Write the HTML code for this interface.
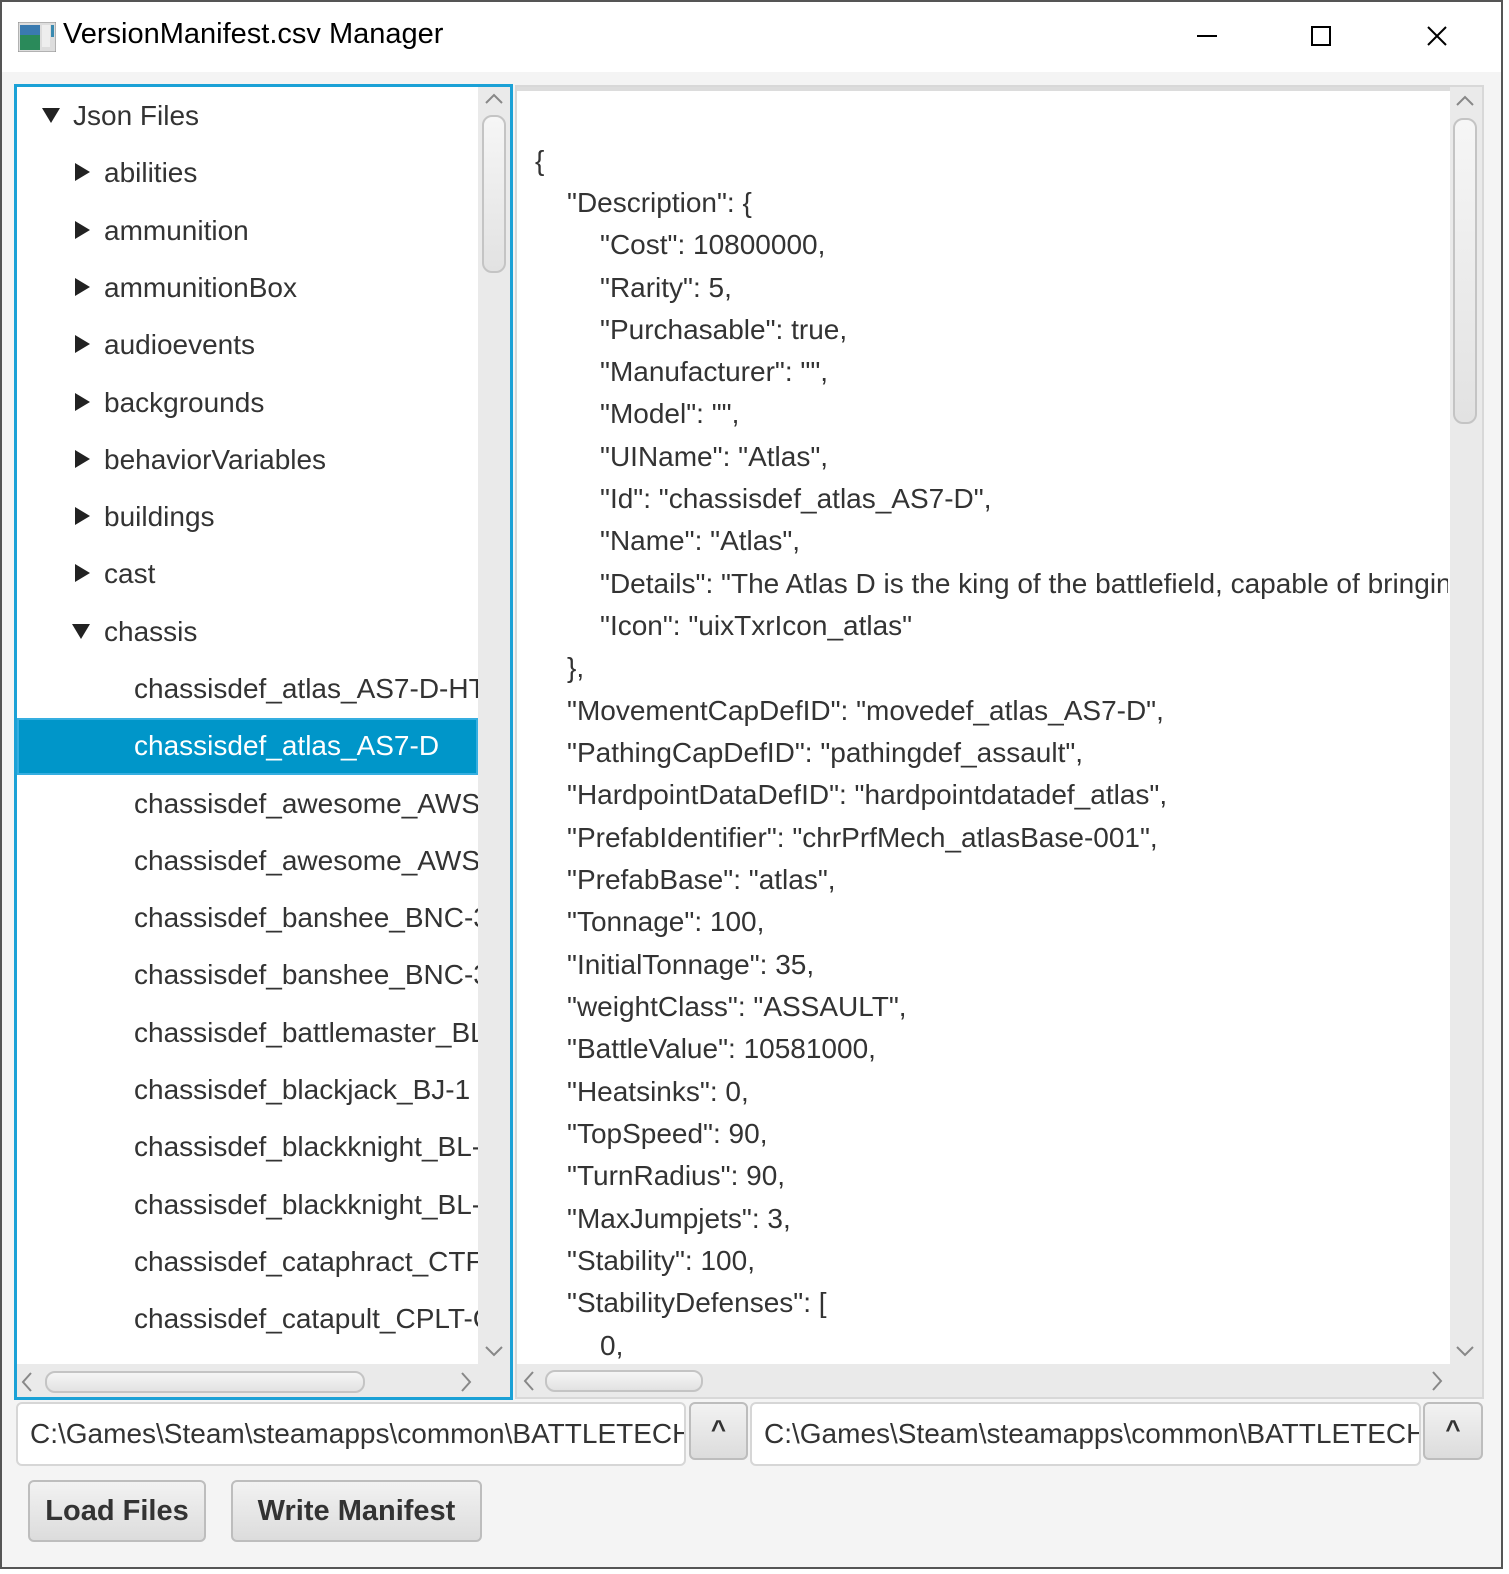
<!DOCTYPE html>
<html><head><meta charset="utf-8"><style>
*{margin:0;padding:0;box-sizing:border-box}
body{width:1509px;height:1574px;background:#fff;position:relative;overflow:hidden;font-family:"Liberation Sans","DejaVu Sans",sans-serif;color:#333}
.win{position:absolute;left:0;top:0;width:1503px;height:1569px;border:2px solid #555;background:#f4f4f4}
.title{position:absolute;left:0;top:0;width:1499px;height:70px;background:#fff}
.abs{position:absolute}
.row{position:absolute;height:57px;line-height:57px;font-size:28px;white-space:nowrap;color:#333}
.tri-r{position:absolute;width:0;height:0;border-top:9px solid transparent;border-bottom:9px solid transparent;border-left:15px solid #222}
.tri-d{position:absolute;width:0;height:0;border-left:9px solid transparent;border-right:9px solid transparent;border-top:15px solid #222}
.jl{position:absolute;font-size:28px;line-height:42px;white-space:nowrap;color:#333}
.sb{background:#eaeaea}
.thumb{position:absolute;border:2px solid #c4c4c4;border-radius:10px;background:linear-gradient(#f6f6f6,#e2e2e2)}
.btn{position:absolute;border:2px solid #bdbdbd;border-radius:6px;background:linear-gradient(#f2f2f2,#dcdcdc);font-weight:bold;font-size:29px;color:#333;text-align:center}
.tf{position:absolute;background:#fff;border:2px solid #d6d6d6;border-radius:6px;font-size:28px;line-height:60px;padding-left:12px;white-space:nowrap;overflow:hidden;color:#333}
</style></head><body>
<div class="win">
<div class="title"></div>
</div>
<!-- title -->
<svg class="abs" style="left:18px;top:22px" width="38" height="30"><rect x="0" y="0" width="38" height="30" fill="#ddd" stroke="#888"/><rect x="2" y="3" width="20" height="25" fill="#2a8a5a"/><rect x="2" y="3" width="20" height="10" fill="#3a7ab0"/><rect x="24" y="3" width="8" height="22" fill="#eee"/><rect x="33" y="3" width="3" height="12" fill="#3a8ab0"/></svg>
<div class="abs" style="left:63px;top:18px;font-size:29px;color:#000;font-family:'Liberation Sans',sans-serif">VersionManifest.csv Manager</div>
<div class="abs" style="left:1197px;top:35px;width:20px;height:2px;background:#000"></div>
<div class="abs" style="left:1311px;top:26px;width:20px;height:20px;border:2px solid #000"></div>
<svg class="abs" style="left:1427px;top:26px" width="20" height="20"><path d="M1 1L19 19M19 1L1 19" stroke="#000" stroke-width="2"/></svg>

<!-- left tree -->
<div class="abs" style="left:14px;top:84px;width:499px;height:1316px;border:3px solid #1ba1d6;background:#fff;overflow:hidden">
  <div class="abs sb" style="left:461px;top:0;width:32px;height:1277px"></div>
  <svg class="abs" style="left:468px;top:6px" width="18" height="12"><path d="M1 10L9 2L17 10" stroke="#888" stroke-width="2" fill="none"/></svg>
  <div class="thumb" style="left:465px;top:28px;width:24px;height:158px"></div>
  <svg class="abs" style="left:468px;top:1258px" width="18" height="12"><path d="M1 2L9 10L17 2" stroke="#888" stroke-width="2" fill="none"/></svg>
  <div class="abs sb" style="left:0;top:1277px;width:493px;height:33px"></div>
  <svg class="abs" style="left:4px;top:1285px" width="12" height="20"><path d="M10 1L2 10L10 19" stroke="#888" stroke-width="2" fill="none"/></svg>
  <div class="thumb" style="left:28px;top:1284px;width:320px;height:22px"></div>
  <svg class="abs" style="left:443px;top:1285px" width="12" height="20"><path d="M2 1L10 10L2 19" stroke="#888" stroke-width="2" fill="none"/></svg>
</div>
<div class="abs" style="left:17px;top:87px;width:461px;height:1277px;overflow:hidden">
  <div class="abs" style="left:0;top:631px;width:461px;height:57px;background:#0096c9;border:2px solid #35aee0"></div>
  <div class="tri-d" style="left:25px;top:21px"></div><div class="row" style="left:56px;top:0">Json Files</div>
  <div class="tri-r" style="left:58px;top:76px"></div><div class="row" style="left:87px;top:57px">abilities</div>
  <div class="tri-r" style="left:58px;top:134px"></div><div class="row" style="left:87px;top:115px">ammunition</div>
  <div class="tri-r" style="left:58px;top:191px"></div><div class="row" style="left:87px;top:172px">ammunitionBox</div>
  <div class="tri-r" style="left:58px;top:248px"></div><div class="row" style="left:87px;top:229px">audioevents</div>
  <div class="tri-r" style="left:58px;top:306px"></div><div class="row" style="left:87px;top:287px">backgrounds</div>
  <div class="tri-r" style="left:58px;top:363px"></div><div class="row" style="left:87px;top:344px">behaviorVariables</div>
  <div class="tri-r" style="left:58px;top:420px"></div><div class="row" style="left:87px;top:401px">buildings</div>
  <div class="tri-r" style="left:58px;top:477px"></div><div class="row" style="left:87px;top:458px">cast</div>
  <div class="tri-d" style="left:55px;top:537px"></div><div class="row" style="left:87px;top:516px">chassis</div>
  <div class="row" style="left:117px;top:573px">chassisdef_atlas_AS7-D-HT</div>
  <div class="row" style="left:117px;top:630px;color:#fff">chassisdef_atlas_AS7-D</div>
  <div class="row" style="left:117px;top:688px">chassisdef_awesome_AWS-8Q</div>
  <div class="row" style="left:117px;top:745px">chassisdef_awesome_AWS-8T</div>
  <div class="row" style="left:117px;top:802px">chassisdef_banshee_BNC-3E</div>
  <div class="row" style="left:117px;top:859px">chassisdef_banshee_BNC-3M</div>
  <div class="row" style="left:117px;top:917px">chassisdef_battlemaster_BLR</div>
  <div class="row" style="left:117px;top:974px">chassisdef_blackjack_BJ-1</div>
  <div class="row" style="left:117px;top:1031px">chassisdef_blackknight_BL-6</div>
  <div class="row" style="left:117px;top:1089px">chassisdef_blackknight_BL-9</div>
  <div class="row" style="left:117px;top:1146px">chassisdef_cataphract_CTF-1X</div>
  <div class="row" style="left:117px;top:1203px">chassisdef_catapult_CPLT-C1</div>
</div>

<!-- right text area -->
<div class="abs" style="left:515px;top:85px;width:969px;height:1314px;border:2px solid #d8d8d8;background:#fff;overflow:hidden">
  <div class="abs" style="left:0;top:0;width:969px;height:4px;background:#dcdcdc"></div>
  <div class="abs sb" style="left:933px;top:0;width:32px;height:1277px"></div>
  <svg class="abs" style="left:939px;top:8px" width="18" height="12"><path d="M1 10L9 2L17 10" stroke="#888" stroke-width="2" fill="none"/></svg>
  <div class="thumb" style="left:936px;top:31px;width:24px;height:306px"></div>
  <svg class="abs" style="left:939px;top:1258px" width="18" height="12"><path d="M1 2L9 10L17 2" stroke="#888" stroke-width="2" fill="none"/></svg>
  <div class="abs sb" style="left:0;top:1277px;width:965px;height:33px"></div>
  <svg class="abs" style="left:6px;top:1284px" width="12" height="20"><path d="M10 1L2 10L10 19" stroke="#888" stroke-width="2" fill="none"/></svg>
  <div class="thumb" style="left:28px;top:1283px;width:158px;height:22px"></div>
  <svg class="abs" style="left:914px;top:1284px" width="12" height="20"><path d="M2 1L10 10L2 19" stroke="#888" stroke-width="2" fill="none"/></svg>
</div>
<div class="abs" style="left:517px;top:90px;width:931px;height:1272px;overflow:hidden">
<div class="jl" style="left:18px;top:50px">{</div>
<div class="jl" style="left:50px;top:92px">"Description": {</div>
<div class="jl" style="left:83px;top:134px">"Cost": 10800000,</div>
<div class="jl" style="left:83px;top:177px">"Rarity": 5,</div>
<div class="jl" style="left:83px;top:219px">"Purchasable": true,</div>
<div class="jl" style="left:83px;top:261px">"Manufacturer": "",</div>
<div class="jl" style="left:83px;top:303px">"Model": "",</div>
<div class="jl" style="left:83px;top:346px">"UIName": "Atlas",</div>
<div class="jl" style="left:83px;top:388px">"Id": "chassisdef_atlas_AS7-D",</div>
<div class="jl" style="left:83px;top:430px">"Name": "Atlas",</div>
<div class="jl" style="left:83px;top:473px">"Details": "The Atlas D is the king of the battlefield, capable of bringing</div>
<div class="jl" style="left:83px;top:515px">"Icon": "uixTxrIcon_atlas"</div>
<div class="jl" style="left:50px;top:557px">},</div>
<div class="jl" style="left:50px;top:600px">"MovementCapDefID": "movedef_atlas_AS7-D",</div>
<div class="jl" style="left:50px;top:642px">"PathingCapDefID": "pathingdef_assault",</div>
<div class="jl" style="left:50px;top:684px">"HardpointDataDefID": "hardpointdatadef_atlas",</div>
<div class="jl" style="left:50px;top:727px">"PrefabIdentifier": "chrPrfMech_atlasBase-001",</div>
<div class="jl" style="left:50px;top:769px">"PrefabBase": "atlas",</div>
<div class="jl" style="left:50px;top:811px">"Tonnage": 100,</div>
<div class="jl" style="left:50px;top:854px">"InitialTonnage": 35,</div>
<div class="jl" style="left:50px;top:896px">"weightClass": "ASSAULT",</div>
<div class="jl" style="left:50px;top:938px">"BattleValue": 10581000,</div>
<div class="jl" style="left:50px;top:981px">"Heatsinks": 0,</div>
<div class="jl" style="left:50px;top:1023px">"TopSpeed": 90,</div>
<div class="jl" style="left:50px;top:1065px">"TurnRadius": 90,</div>
<div class="jl" style="left:50px;top:1108px">"MaxJumpjets": 3,</div>
<div class="jl" style="left:50px;top:1150px">"Stability": 100,</div>
<div class="jl" style="left:50px;top:1192px">"StabilityDefenses": [</div>
<div class="jl" style="left:83px;top:1235px">0,</div>
</div>

<!-- bottom -->
<div class="tf" style="left:16px;top:1402px;width:670px;height:64px">C:\Games\Steam\steamapps\common\BATTLETECH\BattleTech_Data</div>
<div class="btn" style="left:689px;top:1402px;width:59px;height:58px;line-height:50px;font-size:26px">^</div>
<div class="tf" style="left:750px;top:1402px;width:671px;height:64px">C:\Games\Steam\steamapps\common\BATTLETECH\BattleTech_Data</div>
<div class="btn" style="left:1423px;top:1402px;width:60px;height:58px;line-height:50px;font-size:26px">^</div>
<div class="btn" style="left:28px;top:1480px;width:178px;height:62px;line-height:58px">Load Files</div>
<div class="btn" style="left:231px;top:1480px;width:251px;height:62px;line-height:58px">Write Manifest</div>
</body></html>
